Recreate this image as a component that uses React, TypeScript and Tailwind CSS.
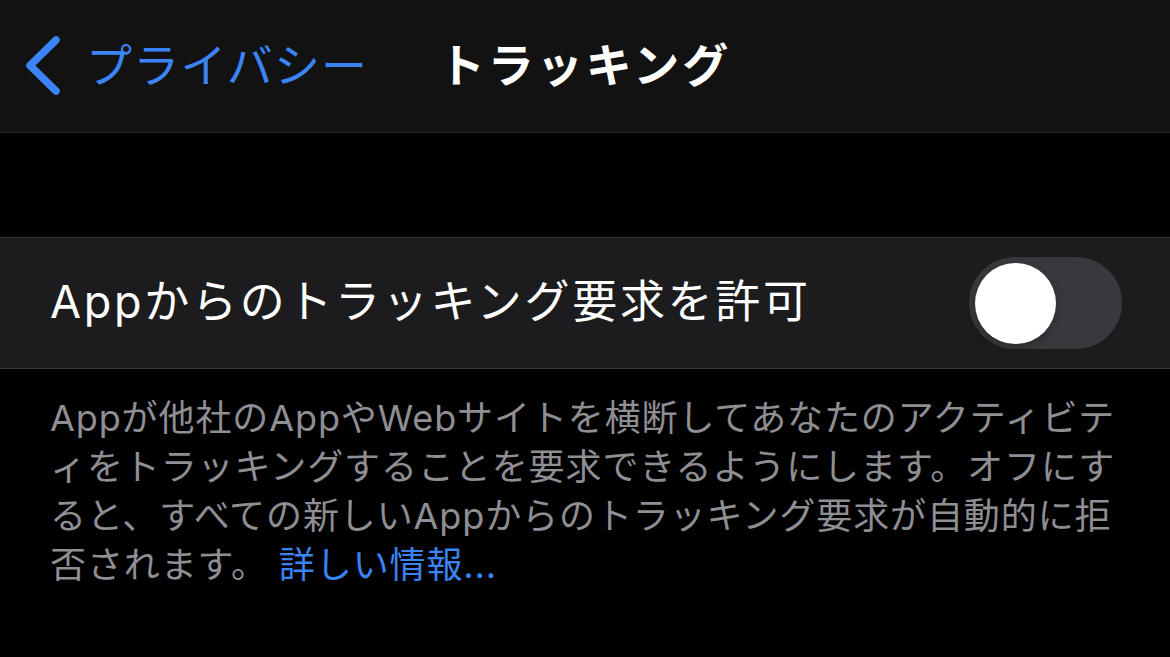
import React, { useState } from 'react';

const font = { fontFamily: 'Inter, "Noto Sans CJK JP", sans-serif' };

const BackChevron = () => (
  <svg width="40" height="60" viewBox="0 0 40 60" className="shrink-0">
    <polyline
      points="32,5 6,30.5 32,56"
      fill="none"
      stroke="#3b84f6"
      strokeWidth="7.5"
      strokeLinecap="round"
      strokeLinejoin="round"
    />
  </svg>
);

const Toggle = ({ on, onChange }: { on: boolean; onChange: () => void }) => (
  <button
    onClick={onChange}
    className={`relative w-[153px] h-[92px] rounded-full shrink-0 ${on ? 'bg-[#30d158]' : 'bg-[#39393d]'}`}
  >
    <span
      className={`absolute top-[6px] w-[81px] h-[81px] rounded-full bg-white shadow-[0_3px_8px_rgba(0,0,0,0.25)] ${on ? 'left-[66px]' : 'left-[6px]'}`}
    />
  </button>
);

export default function App() {
  const [allow, setAllow] = useState(false);

  return (
    <div className="w-[1170px] h-[657px] bg-black overflow-hidden" style={font}>
      {/* Navigation bar */}
      <header className="h-[133px] bg-[#121212] border-b border-[#2a2a2c] grid grid-cols-[1fr_auto_1fr] items-center">
        <div className="flex items-center pl-[24px] gap-[22px] pb-[2px]">
          <BackChevron />
          <span className="text-[46px] leading-none text-[#3b84f6] tracking-[1.2px]">プライバシー</span>
        </div>
        <h1 className="text-[46px] leading-none font-bold text-white tracking-[3px] pb-[2px]">トラッキング</h1>
        <div />
      </header>

      {/* Group spacing */}
      <div className="h-[104px]" />

      {/* Setting row */}
      <div className="h-[132px] bg-[#1c1c1e] border-y border-[#38383a] flex items-center justify-between pl-[50px] pr-[48px]">
        <span className="text-[45px] leading-none text-white tracking-[2.7px] pb-[4px]">Appからのトラッキング要求を許可</span>
        <Toggle on={allow} onChange={() => setAllow(!allow)} />
      </div>

      {/* Footer note */}
      <p className="pl-[50px] pr-[20px] pt-[25px] text-[36px] leading-[49px] tracking-[0.9px] text-[#8e8e93]">
        Appが他社のAppやWebサイトを横断してあなたのアクティビテ
        <br />
        ィをトラッキングすることを要求できるようにします。オフにす
        <br />
        ると、すべての新しいAppからのトラッキング要求が自動的に拒
        <br />
        否されます。 <span className="text-[#3b84f6]">詳しい情報...</span>
      </p>
    </div>
  );
}
